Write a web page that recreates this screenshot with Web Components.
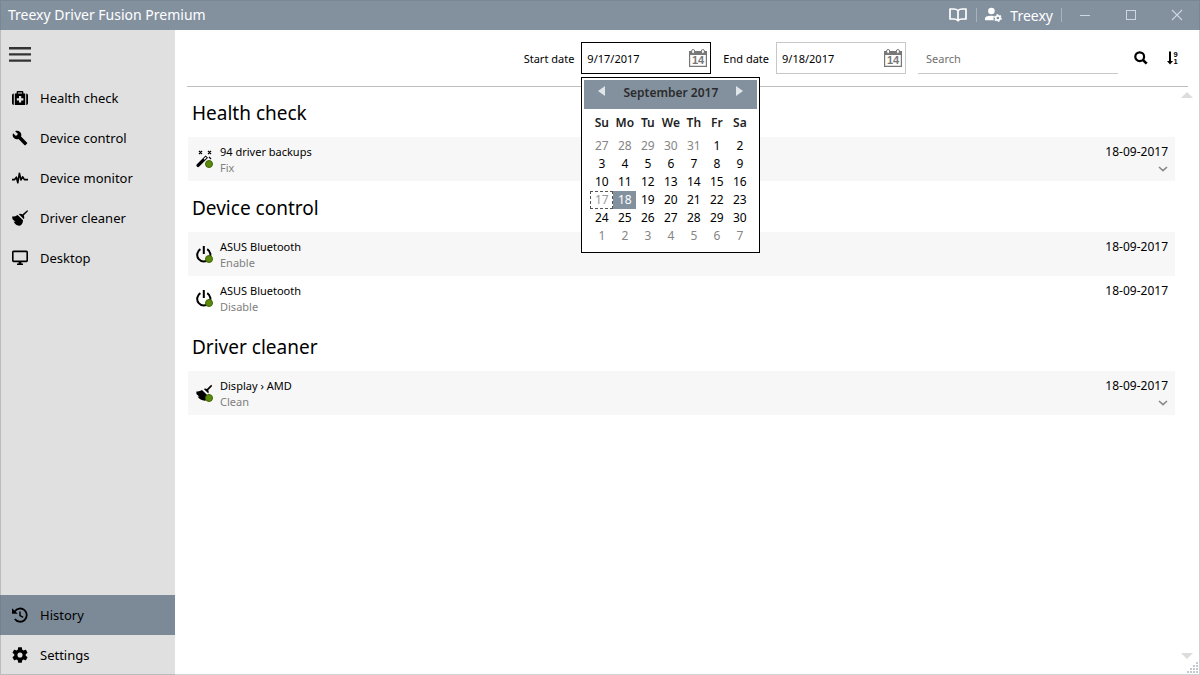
<!DOCTYPE html>
<html lang="en">
<head>
<meta charset="utf-8">
<meta name="viewport" content="width=device-width, initial-scale=1">
<title>Treexy Driver Fusion Premium</title>
<style>
  html, body { margin: 0; height: 100%; }
  body {
    font-family: "Noto Sans", "Open Sans", sans-serif;
    font-size: 11px;
    color: #000;
    background: #fff;
    --accent: #83919f;
    --line: #c8c8c8;
  }
</style>
</head>
<body>
<driver-app></driver-app>

<script>
const ICONS = {
  menu: ['0 0 22 16', '<path d="M0 1.2h22M0 7.4h22M0 13.6h22" stroke="#333" stroke-width="2.4"/>'],
  medkit: ['0 0 16 16', '<path d="M0 5.2A1.8 1.8 0 0 1 1.8 3.4V15A1.8 1.8 0 0 1 0 13.2zM16 5.2A1.8 1.8 0 0 0 14.2 3.4V15A1.8 1.8 0 0 0 16 13.2z"/><path fill-rule="evenodd" d="M2.8 3.4H4.6V2.2Q4.6 1 5.8 1H10.2Q11.4 1 11.4 2.2V3.4H13.2V15H2.8zM6 3.4H10V2.4H6zM7 6V8.2H4.8V10.4H7V12.6H9.2V10.4H11.4V8.2H9.2V6z"/>'],
  wrench: ['0 0 24 24', '<path d="M22.7 19L13.6 9.9C14.5 7.6 14 4.9 12.1 3C10.1 1 7.1.6 4.7 1.7L9 6L6 9L1.6 4.7C.4 7.1.9 10.1 2.9 12.1C4.8 14 7.5 14.5 9.8 13.6L18.9 22.7C19.3 23.1 19.9 23.1 20.3 22.7L22.6 20.4C23.1 20 23.1 19.3 22.7 19Z"/>'],
  pulse: ['0 0 16 16', '<path d="M0 9.6H2.6L4.4 7.2L5.8 12.8L7.4 3.2L9 10L10.6 6.8L12.4 9.6H16" fill="none" stroke="currentColor" stroke-width="1.6" stroke-linejoin="round"/>'],
  broom: ['0 0 16 16', '<path d="M15.2 0.2Q16 .2 15.9 1.2L11.7 5.6Q12.9 7.4 11.9 9.3L6.7 4.1Q8.7 3.1 10.3 4.4z"/><path d="M5.6 4.9L11 10.3Q11 13.8 8 15.8Q3.4 15.6 1.6 11.4L3.6 12L.6 9.2Q.1 8 .2 6.4Q3.2 6.6 5.6 4.9z"/>'],
  desktop: ['0 0 16 16', '<rect x=".8" y="1.4" width="14.4" height="10" rx=".8" fill="none" stroke="currentColor" stroke-width="1.6"/><path d="M6.6 11.5H9.4V13.6H11V15H5V13.6H6.6z"/>'],
  history: ['0 0 16 16', '<path d="M2.7 4.4A6.6 6.6 0 1 1 2.8 12" fill="none" stroke="currentColor" stroke-width="1.8"/><path d="M0 1.2L5.8 6.8H0z"/><path d="M8 4.4V8.6L11.2 10.3" fill="none" stroke="currentColor" stroke-width="1.5"/>'],
  gear: ['2 2 20 20', '<path fill-rule="evenodd" d="M19.14 12.94c.04-.3.06-.61.06-.94c0-.32-.02-.64-.07-.94l2.03-1.58c.18-.14.23-.41.12-.61l-1.92-3.32c-.12-.22-.37-.29-.59-.22l-2.39.96c-.5-.38-1.03-.7-1.62-.94L14.4 2.81c-.04-.24-.24-.41-.48-.41h-3.84c-.24 0-.43.17-.47.41L9.25 5.35C8.66 5.59 8.12 5.92 7.63 6.29L5.24 5.33c-.22-.08-.47 0-.59.22L2.74 8.87C2.62 9.08 2.66 9.34 2.86 9.48l2.03 1.58C4.84 11.36 4.8 11.69 4.8 12s.02.64.07.94l-2.03 1.58c-.18.14-.23.41-.12.61l1.92 3.32c.12.22.37.29.59.22l2.39-.96c.5.38 1.03.7 1.62.94l.36 2.54c.05.24.24.41.48.41h3.84c.24 0 .44-.17.47-.41l.36-2.54c.59-.24 1.13-.56 1.62-.94l2.39.96c.22.08.47 0 .59-.22l1.92-3.32c.12-.22.07-.47-.12-.61zM12 15.2a3.2 3.2 0 1 1 0-6.4a3.2 3.2 0 0 1 0 6.4z"/>'],
  book: ['0 0 18 14', '<path d="M9 2.8Q7.6 1 4.6 1H1V11H4.6Q7.6 11 9 12.8Q10.4 11 13.4 11H17V1H13.4Q10.4 1 9 2.8V12.6" fill="none" stroke="currentColor" stroke-width="1.7" stroke-linejoin="round"/>'],
  user: ['0 0 17 16', '<circle cx="6.4" cy="4" r="3.3"/><path d="M0 13.2V11.6Q0 8.8 6 8.8Q7.8 8.8 9 9.1Q8 11 8.8 13.2z"/><circle cx="12.9" cy="11" r="2.2" fill="none" stroke="currentColor" stroke-width="1.7"/><circle cx="12.9" cy="11" r="3.3" fill="none" stroke="currentColor" stroke-width="1.2" stroke-dasharray="1.7 1.75"/>'],
  minimize: ['0 0 12 12', '<path d="M1 6.5H11" stroke="currentColor"/>'],
  maximize: ['0 0 12 12', '<rect x="1.5" y="1.5" width="9" height="9" fill="none" stroke="currentColor"/>'],
  close: ['0 0 12 12', '<path d="M1 1L11 11M11 1L1 11" stroke="currentColor" stroke-width="1.1"/>'],
  search: ['0 0 14 14', '<circle cx="5.7" cy="5.7" r="4.4" fill="none" stroke="currentColor" stroke-width="2.2"/><path d="M8.8 8.8L12.7 12.7" stroke="currentColor" stroke-width="2.6"/>'],
  sort: ['0 0 12 14', '<path d="M2 .5H4V10H6L3 13.4L0 10H2z"/><text x="6.6" y="6.2" font-size="7.5" font-weight="700" font-family="Liberation Sans, sans-serif">9</text><text x="6.6" y="13.4" font-size="7.5" font-weight="700" font-family="Liberation Sans, sans-serif">1</text>'],
  calendar: ['0 0 18 18', '<path fill="#777" fill-rule="evenodd" d="M0 2H18V18H0zM1.2 6V16.8H16.8V6z"/><g fill="#fff" stroke="#777"><rect x="2.6" y=".5" width="3" height="4" rx="1.5"/><rect x="12.4" y=".5" width="3" height="4" rx="1.5"/></g><text x="9" y="15.4" text-anchor="middle" fill="#777" font-size="11" font-weight="700" font-family="Liberation Sans, sans-serif">14</text>'],
  wand: ['0 0 18 18', '<path d="M.6 14.4L9.6 5.4L12 7.8L3 16.8Q1.8 17.6.9 16.6Q0 15.6.6 14.4z"/><path d="M7.6 8.8L9.7 6.7L10.7 7.7L8.6 9.8z" fill="#f7f7f7"/><path d="M3 1L6 4M6 1L3 4M12 1L15 4M15 1L12 4M13 7L15 9" stroke="currentColor" stroke-width="1.2"/>'],
  power: ['0 0 18 18', '<path d="M4.4 4.2A6.6 6.6 0 1 0 11.2 4.2" fill="none" stroke="currentColor" stroke-width="2"/><path d="M7.8 1V9" stroke="currentColor" stroke-width="2"/>'],
  sweep: ['0 0 18 18', '<path d="M15.2 .8L16.2 1.9L12.2 6.2Q13.2 7.8 12.4 9.4L7.8 4.9Q9.4 4 10.9 5z"/><path d="M6 6L11.4 11.2V15.6L9 16.8Q4 16.6 1.6 12.6L3.4 12.8L.4 10V7.4Q3.6 7.8 6 6z"/>'],
  chevron: ['0 0 10 6', '<path d="M1 1L5 4.6L9 1" fill="none" stroke="#888" stroke-width="1.6"/>'],
  left: ['0 0 7 10', '<path d="M7 0V10L0 5z"/>'],
  right: ['0 0 7 10', '<path d="M0 0V10L7 5z"/>'],
  up: ['0 0 12 6', '<path d="M0 6H12L6 0z"/>'],
  down: ['0 0 12 6', '<path d="M0 0H12L6 6z"/>'],
  grip: ['0 0 12 12', '<path d="M9 0h2v2H9zM6 3h2v2H6zM9 3h2v2H9zM3 6h2v2H3zM6 6h2v2H6zM9 6h2v2H9zM0 9h2v2H0zM3 9h2v2H3zM6 9h2v2H6zM9 9h2v2H9z"/>']
};

function define(name, render) {
  customElements.define(name, class extends HTMLElement {
    constructor() { super(); this.attachShadow({ mode: 'open' }); }
    connectedCallback() {
      const t = document.createElement('template');
      t.innerHTML = render(this);
      this.shadowRoot.replaceChildren(t.content.cloneNode(true));
    }
  });
}

const buttonReset = 'button{font:inherit;color:inherit;background:none;border:0;padding:0;margin:0;display:flex;align-items:center;justify-content:center}';

define('ui-icon', el => {
  const [box, body] = ICONS[el.getAttribute('name')];
  const [, , w, h] = box.split(' ');
  const size = el.getAttribute('size');
  return `<style>:host{display:block;flex:none}svg{display:block;fill:currentColor}</style>
    <svg viewBox="${box}" width="${size || w}" height="${size || h}" aria-hidden="true">${body}</svg>`;
});

define('title-bar', () => `
  <style>
    :host{display:flex;align-items:center;height:30px;flex:none;box-sizing:border-box;padding:0 8px;background:var(--accent);color:#fff;font-size:14px}
    h1{margin:0;font-size:14px;font-weight:400;flex:1;line-height:30px}
    ${buttonReset}
    .sep{width:1px;height:14px;background:#a9b3bd}
    .book{margin-right:9px}
    .user{gap:8px;margin:0 8px}
    .win{width:46px;height:30px;color:#cdd7e1}
    .win:last-child{width:30px;margin-left:8px}
  </style>
  <h1><slot></slot></h1>
  <button class="book" aria-label="Manual"><ui-icon name="book"></ui-icon></button>
  <span class="sep"></span>
  <button class="user"><ui-icon name="user"></ui-icon>Treexy</button>
  <span class="sep"></span>
  <button class="win" aria-label="Minimize"><ui-icon name="minimize"></ui-icon></button>
  <button class="win" aria-label="Maximize"><ui-icon name="maximize"></ui-icon></button>
  <button class="win" aria-label="Close"><ui-icon name="close"></ui-icon></button>`);

define('nav-item', el => `
  <style>
    :host{display:block}
    a{display:flex;align-items:center;gap:12px;height:40px;padding-left:12px;color:#000;text-decoration:none;font-size:13px}
    :host([current]) a{background:#7c8a98}
  </style>
  <a href="#"${el.hasAttribute('current') ? ' aria-current="page"' : ''}><ui-icon name="${el.getAttribute('icon')}" size="16"></ui-icon><slot></slot></a>`);

define('side-nav', () => `
  <style>
    :host{display:block;width:175px;flex:none;background:#e0e0e0}
    nav{display:flex;flex-direction:column;height:100%}
    ${buttonReset}
    .menu{width:40px;height:48px;padding-top:2px}
    .space{flex:1}
  </style>
  <nav>
    <button class="menu" aria-label="Menu"><ui-icon name="menu"></ui-icon></button>
    <nav-item icon="medkit">Health check</nav-item>
    <nav-item icon="wrench">Device control</nav-item>
    <nav-item icon="pulse">Device monitor</nav-item>
    <nav-item icon="broom">Driver cleaner</nav-item>
    <nav-item icon="desktop">Desktop</nav-item>
    <span class="space"></span>
    <nav-item icon="history" current>History</nav-item>
    <nav-item icon="gear">Settings</nav-item>
  </nav>`);

define('date-field', el => `
  <style>
    :host{display:flex;align-items:center;gap:7px;position:relative}
    .box{display:flex;align-items:center;width:130px;height:32px;box-sizing:border-box;border:1px solid var(--line);padding:0 3px 0 5px;background:#fff;position:relative}
    :host([open]) .box{border-color:#000}
    input{flex:1;min-width:0;border:0;padding:0;outline:0;font:inherit;color:inherit;background:none}
    ${buttonReset}
    ::slotted(*){position:absolute;z-index:2;top:35px;right:-49px}
  </style>
  <label for="d">${el.getAttribute('label')}</label>
  <div class="box">
    <input id="d" type="text" value="${el.getAttribute('value')}">
    <button aria-label="Choose date"><ui-icon name="calendar"></ui-icon></button>
  </div>
  <slot></slot>`);

define('month-calendar', () => {
  const names = ['Su', 'Mo', 'Tu', 'We', 'Th', 'Fr', 'Sa'];
  let rows = '';
  for (let w = 0; w < 6; w++) {
    rows += '<tr>';
    for (let d = 0; d < 7; d++) {
      const n = w * 7 + d - 4;
      const day = n < 1 ? n + 31 : n > 30 ? n - 30 : n;
      const cls = n < 1 || n > 30 ? 'out' : n === 17 ? 'focus' : n === 18 ? 'sel' : '';
      rows += `<td class="${cls}">${day}</td>`;
    }
    rows += '</tr>';
  }
  return `
  <style>
    :host{display:block;width:179px;height:176px;box-sizing:border-box;border:1px solid #000;background:#fff;padding:2px}
    header{display:flex;align-items:flex-start;justify-content:space-between;height:29px;box-sizing:border-box;padding:3px 14px;background:var(--accent);color:#2b2b2b;font-weight:600;font-size:12px;line-height:20px}
    ${buttonReset}
    button{color:#e0e5ea;height:16px}
    table{border-collapse:collapse;table-layout:fixed;width:161px;margin:4px 6px 0}
    th,td{padding:0;text-align:center;height:18px;line-height:18px;font-size:12px}
    th{height:24px;line-height:20px;vertical-align:top;font-weight:600;color:#222}
    .out{color:#858585}
    .focus{color:#999;outline:1px dashed #555;outline-offset:-1px}
    .sel{color:#fff;background:var(--accent)}
  </style>
  <header>
    <button aria-label="Previous month"><ui-icon name="left"></ui-icon></button>
    <span>September 2017</span>
    <button aria-label="Next month"><ui-icon name="right"></ui-icon></button>
  </header>
  <table>
    <thead><tr>${names.map(n => `<th scope="col">${n}</th>`).join('')}</tr></thead>
    <tbody>${rows}</tbody>
  </table>`;
});

define('filter-bar', () => `
  <style>
    :host{display:flex;justify-content:flex-end;align-items:center;gap:12px;margin:0 12px;padding:12px 9px 12px 0;border-bottom:1px solid #bdbdbd}
    .search{width:200px;height:32px;box-sizing:border-box;border:0;border-bottom:1px solid var(--line);border-radius:0;outline:0;padding:2px 8px 0;font:inherit;background:none}
    .search::placeholder{color:#707070;opacity:1}
    ${buttonReset}
    .tools{display:flex;gap:19px;padding-left:4px}
  </style>
  <date-field label="Start date" value="9/17/2017" open><month-calendar></month-calendar></date-field>
  <date-field label="End date" value="9/18/2017"></date-field>
  <input class="search" type="text" placeholder="Search" aria-label="Search">
  <div class="tools">
    <button aria-label="Find"><ui-icon name="search"></ui-icon></button>
    <button aria-label="Sort by date"><ui-icon name="sort"></ui-icon></button>
  </div>`);

define('history-item', el => `
  <style>
    :host{display:flex;height:44px;box-sizing:border-box;padding:7px 7px 0 8px;gap:6px}
    :host([shaded]){background:#f7f7f7}
    .icon{position:relative;width:18px;height:18px;margin-top:6px}
    .dot{position:absolute;right:1px;bottom:0;width:8px;height:8px;border-radius:50%;background:#5c8a0c;box-sizing:border-box;border:1px solid #416500}
    .text{flex:1;line-height:16px}
    .sub{color:#808080}
    .end{display:flex;flex-direction:column;align-items:flex-end;font-size:12px;line-height:16px;gap:6px}
    ${buttonReset}
  </style>
  <div class="icon"><ui-icon name="${el.getAttribute('icon')}"></ui-icon><span class="dot"></span></div>
  <div class="text"><div><slot></slot></div><div class="sub">${el.getAttribute('action')}</div></div>
  <div class="end"><time datetime="2017-09-18">18-09-2017</time>${el.hasAttribute('more') ? '<button aria-label="Show details"><ui-icon name="chevron"></ui-icon></button>' : ''}</div>`);

define('history-section', el => `
  <style>
    :host{display:block}
    h2{margin:0;padding:13px 4px 10px;font-size:19px;font-weight:400;line-height:28px}
  </style>
  <section><h2>${el.getAttribute('heading')}</h2><slot></slot></section>`);

define('history-page', () => `
  <style>
    :host{display:flex;flex-direction:column;flex:1;min-width:0}
    .body{display:flex;flex:1;min-height:0;padding:0 7px 16px 13px;margin-top:-1px}
    .list{flex:1}
    .scroll{display:flex;flex-direction:column;justify-content:space-between;padding:6px 0 0 6px;color:#dcdcdc}
  </style>
  <filter-bar></filter-bar>
  <div class="body">
    <div class="list">
      <history-section heading="Health check">
        <history-item icon="wand" action="Fix" shaded more>94 driver backups</history-item>
      </history-section>
      <history-section heading="Device control">
        <history-item icon="power" action="Enable" shaded>ASUS Bluetooth</history-item>
        <history-item icon="power" action="Disable">ASUS Bluetooth</history-item>
      </history-section>
      <history-section heading="Driver cleaner">
        <history-item icon="sweep" action="Clean" shaded more>Display › AMD</history-item>
      </history-section>
    </div>
    <div class="scroll"><ui-icon name="up"></ui-icon><ui-icon name="down"></ui-icon></div>
  </div>`);

define('driver-app', () => `
  <style>
    :host{display:flex;flex-direction:column;min-height:100vh;position:relative}
    main{display:flex;flex:1}
    .frame{position:absolute;inset:0;border:1px solid rgba(100,110,120,.3);pointer-events:none}
    .grip{position:absolute;right:1px;bottom:1px;color:#c4c8cf}
  </style>
  <title-bar>Treexy Driver Fusion Premium</title-bar>
  <main><side-nav></side-nav><history-page></history-page></main>
  <ui-icon class="grip" name="grip"></ui-icon>
  <div class="frame"></div>`);
</script>
</body>
</html>
